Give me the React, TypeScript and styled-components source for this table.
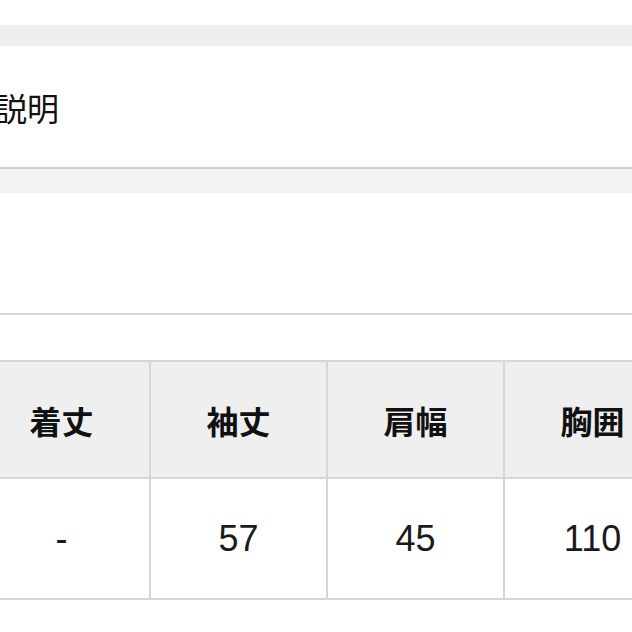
import styled, { createGlobalStyle } from 'styled-components'

const GlobalStyle = createGlobalStyle`
  html, body {
    margin: 0;
    padding: 0;
    background: #fff;
  }
  body {
    font-family: 'Liberation Sans', 'Noto Sans CJK JP', sans-serif;
    color: #1a1a1a;
  }
`

const headers = ['着丈', '袖丈', '肩幅', '胸囲']
const values = ['-', '57', '45', '110']

export default function App() {
  return (
    <Page>
      <GlobalStyle />
      <TopSpacer />
      <Band />
      <Section>
        <SectionTitle>説明</SectionTitle>
      </Section>
      <Band $light />
      <EmptyBlock />
      <Gap />
      <SizeTable>
        {headers.map((h) => (
          <HeadCell key={h}>{h}</HeadCell>
        ))}
        {values.map((v, i) => (
          <ValueCell key={i}>{v}</ValueCell>
        ))}
      </SizeTable>
    </Page>
  )
}

const Page = styled.div`
  width: 632px;
  height: 632px;
  overflow: hidden;
  display: flex;
  flex-direction: column;
`

const TopSpacer = styled.div`
  height: 25px;
`

const Band = styled.div<{ $light?: boolean }>`
  height: ${(p) => (p.$light ? '24px' : '21px')};
  background: ${(p) => (p.$light ? '#f2f2f2' : '#efefef')};
  flex-shrink: 0;
`

const Section = styled.div`
  height: 121px;
  display: flex;
  align-items: center;
  border-bottom: 2px solid #cfcfcf;
  flex-shrink: 0;
`

const SectionTitle = styled.h2`
  margin: 0 0 0 -5px;
  font-family: 'Noto Sans CJK JP', sans-serif;
  font-size: 32px;
  font-weight: 400;
  line-height: 1;
  color: #111;
`

const EmptyBlock = styled.div`
  height: 120px;
  border-bottom: 2px solid #d4d4d4;
  flex-shrink: 0;
`

const Gap = styled.div`
  height: 45px;
  flex-shrink: 0;
`

const SizeTable = styled.div`
  display: grid;
  grid-template-columns: repeat(4, 177px);
  grid-template-rows: 117px 121px;
  margin-left: -28px;
  border-top: 2px solid #d6d6d6;
  border-left: 2px solid #d6d6d6;
  flex-shrink: 0;
`

const Cell = styled.div`
  display: flex;
  align-items: center;
  justify-content: center;
  border-right: 2px solid #d6d6d6;
  border-bottom: 2px solid #d6d6d6;
`

const HeadCell = styled(Cell)`
  background: #efefef;
  font-family: 'Noto Sans CJK JP', sans-serif;
  font-weight: 700;
  font-size: 32px;
  color: #111;
`

const ValueCell = styled(Cell)`
  background: #fff;
  font-size: 36px;
  color: #1a1a1a;
`
